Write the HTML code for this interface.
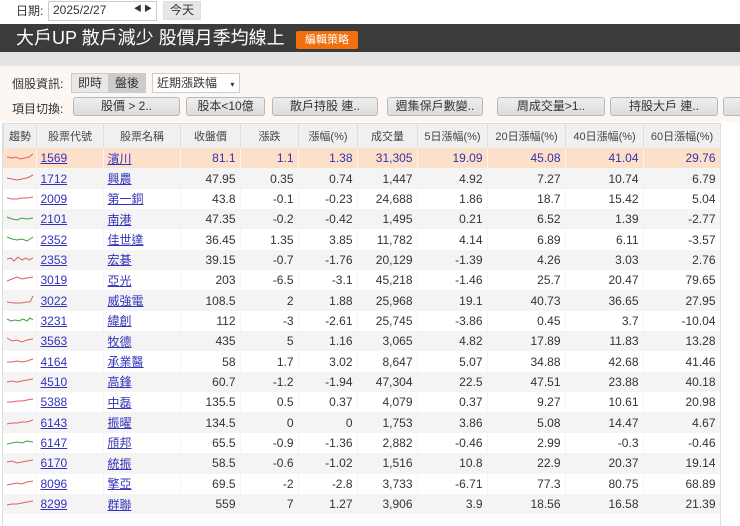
<!DOCTYPE html>
<html><head><meta charset="utf-8"><style>
*{margin:0;padding:0;box-sizing:border-box}
body{width:740px;height:526px;overflow:hidden;background:#fff;font-family:"Liberation Sans","Noto Sans CJK TC",sans-serif;font-size:12px;color:#333;position:relative}
.abs{position:absolute}
.date{left:16px;top:2px;font-size:12px;color:#333}
.dbox{left:48px;top:1px;width:109px;height:20px;border:1px solid #ccc;background:#fff;padding:1px 4px;font-size:12px}
.today{left:163px;top:1px;width:38px;height:19px;background:#e6e6e6;border:1px solid #ddd;text-align:center;font-size:12px;line-height:17px}
.bar{left:0;top:24px;width:740px;height:28px;background:#3b3b3b;color:#fff;font-size:18px;line-height:28px;padding-left:16px}
.edit{left:296px;top:31px;width:62px;height:18px;background:#f07010;color:#fff;font-size:11px;line-height:18px;text-align:center;border-radius:2px}
.gray{left:0;top:52px;width:740px;height:14px;background:#e6e4e2}
.pink{left:0;top:66px;width:740px;height:56px;background:#fdf7f4}
.lbl{font-size:12px;color:#333}
.seg{top:73px;height:20px;background:#e8e8e8;border:1px solid #ccc;font-size:12px;line-height:18px;text-align:center}
.btn{top:97px;height:19px;background:linear-gradient(#eee,#ddd);border:1px solid #b8b8b8;border-radius:3px;font-size:12px;line-height:17px;text-align:center;color:#333}
table{position:absolute;left:3px;top:123px;border-collapse:collapse;table-layout:fixed}
th{height:25px;background:#f0f0f0;border:1px solid #ddd;font-weight:normal;font-size:11px;color:#444}
td{height:20.35px;padding:0 4px;text-align:right;font-size:12px;border-right:1px solid #f4f4f4}
tr:nth-child(even) td{background:#f4f4f4}
tr.hl td{background:#fde0ca;color:#3333aa}
td.l{text-align:left}
a{color:#3333bb;text-decoration:underline}
td.c{padding:0 2px}
</style></head><body>
<div class="abs date">日期:</div>
<div class="abs dbox">2025/2/27<span style="position:absolute;right:4px;top:1px;font-size:8px">◀ ▶</span></div>
<div class="abs today">今天</div>
<div class="abs bar">大戶UP 散戶減少 股價月季均線上</div>
<div class="abs edit">編輯策略</div>
<div class="abs gray"></div>
<div class="abs pink"></div>
<div class="abs lbl" style="left:12px;top:75px">個股資訊:</div>
<div class="abs seg" style="left:71px;width:38px">即時</div>
<div class="abs seg" style="left:108px;width:38px;background:#ccc">盤後</div>
<div class="abs seg" style="left:152px;width:88px;background:#fff;text-align:left;padding-left:4px">近期漲跌幅 <span style="font-size:8px;margin-left:10px">▾</span></div>
<div class="abs lbl" style="left:12px;top:100px">項目切換:</div>
<div class="abs btn" style="left:73px;width:107px">股價 &gt; 2..</div>
<div class="abs btn" style="left:186px;width:79px">股本&lt;10億</div>
<div class="abs btn" style="left:272px;width:106px">散戶持股 連..</div>
<div class="abs btn" style="left:387px;width:96px">週集保戶數變..</div>
<div class="abs btn" style="left:497px;width:108px">周成交量&gt;1..</div>
<div class="abs btn" style="left:610px;width:108px">持股大戶 連..</div>
<div class="abs btn" style="left:723px;width:30px"></div>
<table>
<colgroup><col style="width:33px"><col style="width:67px"><col style="width:77px"><col style="width:60px"><col style="width:58px"><col style="width:59px"><col style="width:60px"><col style="width:70px"><col style="width:78px"><col style="width:78px"><col style="width:77px"></colgroup>
<tr><th>趨勢</th><th>股票代號</th><th>股票名稱</th><th>收盤價</th><th>漲跌</th><th>漲幅(%)</th><th>成交量</th><th>5日漲幅(%)</th><th>20日漲幅(%)</th><th>40日漲幅(%)</th><th>60日漲幅(%)</th></tr>
</table>
<table style="top:148px">
<colgroup><col style="width:33px"><col style="width:67px"><col style="width:77px"><col style="width:60px"><col style="width:58px"><col style="width:59px"><col style="width:60px"><col style="width:70px"><col style="width:78px"><col style="width:78px"><col style="width:77px"></colgroup>
<tr class="hl"><td class="c"><svg width="28" height="10"><path d="M1 5L6 6L10 5L14 7L19 6L23 5L27 2" fill="none" stroke="#e06060"/></svg></td><td class="l"><a>1569</a></td><td class="l"><a>濱川</a></td><td>81.1</td><td>1.1</td><td>1.38</td><td>31,305</td><td>19.09</td><td>45.08</td><td>41.04</td><td>29.76</td></tr>
<tr><td class="c"><svg width="28" height="10"><path d="M1 5L6 6L11 7L16 6L21 5L27 2" fill="none" stroke="#e06060"/></svg></td><td class="l"><a>1712</a></td><td class="l"><a>興農</a></td><td>47.95</td><td>0.35</td><td>0.74</td><td>1,447</td><td>4.92</td><td>7.27</td><td>10.74</td><td>6.79</td></tr>
<tr><td class="c"><svg width="28" height="10"><path d="M1 5L6 6L11 6L16 5L21 5L27 4" fill="none" stroke="#e06060"/></svg></td><td class="l"><a>2009</a></td><td class="l"><a>第一銅</a></td><td>43.8</td><td>-0.1</td><td>-0.23</td><td>24,688</td><td>1.86</td><td>18.7</td><td>15.42</td><td>5.04</td></tr>
<tr><td class="c"><svg width="28" height="10"><path d="M1 4L6 6L11 7L16 5L21 6L27 5" fill="none" stroke="#40a040"/></svg></td><td class="l"><a>2101</a></td><td class="l"><a>南港</a></td><td>47.35</td><td>-0.2</td><td>-0.42</td><td>1,495</td><td>0.21</td><td>6.52</td><td>1.39</td><td>-2.77</td></tr>
<tr><td class="c"><svg width="28" height="10"><path d="M1 3L6 5L11 6L16 5L21 7L27 3" fill="none" stroke="#40a040"/></svg></td><td class="l"><a>2352</a></td><td class="l"><a>佳世達</a></td><td>36.45</td><td>1.35</td><td>3.85</td><td>11,782</td><td>4.14</td><td>6.89</td><td>6.11</td><td>-3.57</td></tr>
<tr><td class="c"><svg width="28" height="10"><path d="M1 5L5 4L8 7L12 3L16 6L20 4L23 6L27 4" fill="none" stroke="#e06060"/></svg></td><td class="l"><a>2353</a></td><td class="l"><a>宏碁</a></td><td>39.15</td><td>-0.7</td><td>-1.76</td><td>20,129</td><td>-1.39</td><td>4.26</td><td>3.03</td><td>2.76</td></tr>
<tr><td class="c"><svg width="28" height="10"><path d="M1 7L6 5L11 3L16 5L21 4L27 3" fill="none" stroke="#e06060"/></svg></td><td class="l"><a>3019</a></td><td class="l"><a>亞光</a></td><td>203</td><td>-6.5</td><td>-3.1</td><td>45,218</td><td>-1.46</td><td>25.7</td><td>20.47</td><td>79.65</td></tr>
<tr><td class="c"><svg width="28" height="10"><path d="M1 7L8 8L15 8L21 7L24 7L27 1" fill="none" stroke="#e06060"/></svg></td><td class="l"><a>3022</a></td><td class="l"><a>威強電</a></td><td>108.5</td><td>2</td><td>1.88</td><td>25,968</td><td>19.1</td><td>40.73</td><td>36.65</td><td>27.95</td></tr>
<tr><td class="c"><svg width="28" height="10"><path d="M1 4L5 6L9 5L13 6L17 4L21 6L24 3L27 5" fill="none" stroke="#40a040"/></svg></td><td class="l"><a>3231</a></td><td class="l"><a>緯創</a></td><td>112</td><td>-3</td><td>-2.61</td><td>25,745</td><td>-3.86</td><td>0.45</td><td>3.7</td><td>-10.04</td></tr>
<tr><td class="c"><svg width="28" height="10"><path d="M1 3L6 6L11 5L16 7L21 5L27 4" fill="none" stroke="#e06060"/></svg></td><td class="l"><a>3563</a></td><td class="l"><a>牧德</a></td><td>435</td><td>5</td><td>1.16</td><td>3,065</td><td>4.82</td><td>17.89</td><td>11.83</td><td>13.28</td></tr>
<tr><td class="c"><svg width="28" height="10"><path d="M1 6L6 6L11 5L16 6L21 5L27 3" fill="none" stroke="#e06060"/></svg></td><td class="l"><a>4164</a></td><td class="l"><a>承業醫</a></td><td>58</td><td>1.7</td><td>3.02</td><td>8,647</td><td>5.07</td><td>34.88</td><td>42.68</td><td>41.46</td></tr>
<tr><td class="c"><svg width="28" height="10"><path d="M1 6L6 5L11 6L16 5L21 4L27 3" fill="none" stroke="#e06060"/></svg></td><td class="l"><a>4510</a></td><td class="l"><a>高鋒</a></td><td>60.7</td><td>-1.2</td><td>-1.94</td><td>47,304</td><td>22.5</td><td>47.51</td><td>23.88</td><td>40.18</td></tr>
<tr><td class="c"><svg width="28" height="10"><path d="M1 6L6 6L11 5L16 5L21 4L27 3" fill="none" stroke="#e06060"/></svg></td><td class="l"><a>5388</a></td><td class="l"><a>中磊</a></td><td>135.5</td><td>0.5</td><td>0.37</td><td>4,079</td><td>0.37</td><td>9.27</td><td>10.61</td><td>20.98</td></tr>
<tr><td class="c"><svg width="28" height="10"><path d="M1 7L6 6L11 6L16 5L21 5L27 3" fill="none" stroke="#e06060"/></svg></td><td class="l"><a>6143</a></td><td class="l"><a>振曜</a></td><td>134.5</td><td>0</td><td>0</td><td>1,753</td><td>3.86</td><td>5.08</td><td>14.47</td><td>4.67</td></tr>
<tr><td class="c"><svg width="28" height="10"><path d="M1 7L6 6L11 5L16 6L21 4L27 5" fill="none" stroke="#40a040"/></svg></td><td class="l"><a>6147</a></td><td class="l"><a>頎邦</a></td><td>65.5</td><td>-0.9</td><td>-1.36</td><td>2,882</td><td>-0.46</td><td>2.99</td><td>-0.3</td><td>-0.46</td></tr>
<tr><td class="c"><svg width="28" height="10"><path d="M1 5L6 4L11 6L16 5L21 4L27 3" fill="none" stroke="#e06060"/></svg></td><td class="l"><a>6170</a></td><td class="l"><a>統振</a></td><td>58.5</td><td>-0.6</td><td>-1.02</td><td>1,516</td><td>10.8</td><td>22.9</td><td>20.37</td><td>19.14</td></tr>
<tr><td class="c"><svg width="28" height="10"><path d="M1 7L6 6L11 5L16 6L21 4L27 3" fill="none" stroke="#e06060"/></svg></td><td class="l"><a>8096</a></td><td class="l"><a>擎亞</a></td><td>69.5</td><td>-2</td><td>-2.8</td><td>3,733</td><td>-6.71</td><td>77.3</td><td>80.75</td><td>68.89</td></tr>
<tr><td class="c"><svg width="28" height="10"><path d="M1 7L6 6L11 6L16 5L21 4L27 3" fill="none" stroke="#e06060"/></svg></td><td class="l"><a>8299</a></td><td class="l"><a>群聯</a></td><td>559</td><td>7</td><td>1.27</td><td>3,906</td><td>3.9</td><td>18.56</td><td>16.58</td><td>21.39</td></tr>
</table>
<div class="abs" style="left:720px;top:123px;width:1px;height:403px;background:#ddd"></div>
<div class="abs" style="left:2px;top:123px;width:1px;height:403px;background:#ddd"></div>
</body></html>
